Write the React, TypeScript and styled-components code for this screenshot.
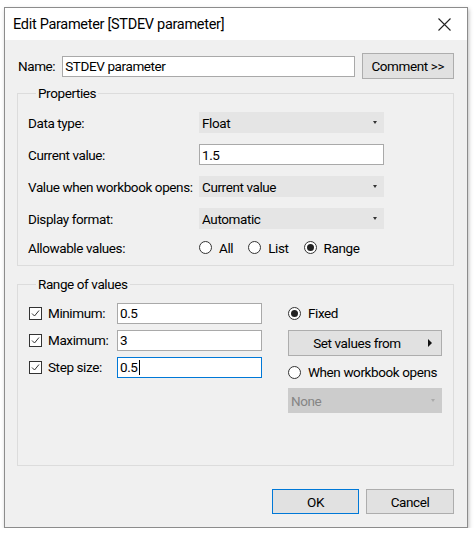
import React from "react";
import styled, { createGlobalStyle } from "styled-components";

const GlobalStyle = createGlobalStyle`
  html, body {
    margin: 0;
    padding: 0;
    background: #ffffff;
  }
  body {
    font-family: Roboto, "Noto Sans", "Liberation Sans", sans-serif;
    font-size: 13.5px;
    letter-spacing: -0.4px;
    color: #000;
  }
`;

const Window = styled.div`
  margin: 7px 0 0 4px;
  width: 464px;
  height: 521px;
  box-sizing: border-box;
  border: 1px solid #8c8c8c;
  background: #f0f0f0;
  box-shadow: 1px 2px 4px rgba(0, 0, 0, 0.25);
  display: flex;
  flex-direction: column;
`;

const TitleBar = styled.div`
  height: 32px;
  background: #ffffff;
  display: flex;
  align-items: center;
  justify-content: space-between;
  padding: 0 16px 0 8px;
  font-size: 14.5px;
  letter-spacing: -0.3px;
`;

const Body = styled.div`
  flex: 1;
  display: flex;
  flex-direction: column;
  padding: 13px 13px 13px 12px;
`;

const NameRow = styled.div`
  display: flex;
  align-items: center;
  gap: 7px;
  padding-left: 1px;
`;

const Label = styled.span`
  white-space: nowrap;
`;

const TextBox = styled.div<{ $width: number; $focused?: boolean }>`
  width: ${(p) => p.$width}px;
  height: 21px;
  box-sizing: border-box;
  background: #fff;
  border: 1px solid ${(p) => (p.$focused ? "#0078d7" : "#a9a9a9")};
  display: flex;
  align-items: center;
  padding-left: 2px;
  white-space: nowrap;
`;

const Caret = styled.span`
  display: inline-block;
  width: 1px;
  height: 15px;
  margin-left: 1px;
  background: #000;
`;

const Button = styled.div<{ $width: number; $height?: number; $default?: boolean; $padRight?: number }>`
  width: ${(p) => p.$width}px;
  height: ${(p) => p.$height ?? 25}px;
  box-sizing: border-box;
  background: #e1e1e1;
  border: 1px solid ${(p) => (p.$default ? "#0078d7" : "#adadad")};
  display: flex;
  align-items: center;
  justify-content: center;
  padding-right: ${(p) => p.$padRight ?? 0}px;
  position: relative;
  white-space: nowrap;
`;

const Group = styled.fieldset<{ $height: number; $top: number }>`
  margin: ${(p) => p.$top}px 0 0 0;
  height: ${(p) => p.$height}px;
  box-sizing: border-box;
  border: 1px solid #dcdcdc;
  padding: 0 10px 0 10px;
  min-width: 0;
`;

const Legend = styled.legend`
  padding: 0 2px;
  margin-left: 8px;
  line-height: 18px;
`;

const PropGrid = styled.div`
  display: grid;
  grid-template-columns: 171px 185px;
  grid-template-rows: 21px 21px 21px 21px 15px;
  row-gap: 11px;
  align-items: center;
  margin-top: 10px;
`;

const Combo = styled.div<{ $disabled?: boolean; $height?: number }>`
  height: ${(p) => p.$height ?? 21}px;
  box-sizing: border-box;
  background: ${(p) => (p.$disabled ? "#cccccc" : "#e5e5e5")};
  color: ${(p) => (p.$disabled ? "#858585" : "#000")};
  display: flex;
  align-items: center;
  justify-content: space-between;
  padding: 0 7px 0 3px;
`;

const RadioGroup = styled.div`
  display: flex;
  align-items: center;
  gap: 15px;
`;

const Option = styled.label<{ $height?: number }>`
  display: flex;
  align-items: center;
  gap: 7px;
  white-space: nowrap;
  ${(p) => (p.$height ? `height: ${p.$height}px;` : "")}
`;

const RadioCircle = styled.span<{ $checked?: boolean }>`
  width: 13px;
  height: 13px;
  box-sizing: border-box;
  border: 1px solid #333;
  border-radius: 50%;
  background: #fff;
  display: flex;
  align-items: center;
  justify-content: center;
  &::after {
    content: "";
    display: ${(p) => (p.$checked ? "block" : "none")};
    width: 7px;
    height: 7px;
    border-radius: 50%;
    background: #222;
  }
`;

const CheckBox = styled.span`
  width: 13px;
  height: 13px;
  box-sizing: border-box;
  border: 1px solid #333;
  background: #fff;
  display: flex;
  align-items: center;
  justify-content: center;
`;

const RangeBody = styled.div`
  display: flex;
  margin-top: 10px;
`;

const RangeLeft = styled.div`
  display: grid;
  grid-template-columns: 88px 145px;
  grid-auto-rows: 20px;
  row-gap: 7px;
  align-items: center;
  padding-left: 1px;
`;

const CheckLabel = styled.label`
  display: flex;
  align-items: center;
  gap: 6px;
  white-space: nowrap;
`;

const RangeRight = styled.div`
  margin-left: 26px;
  width: 154px;
  display: flex;
  flex-direction: column;
  gap: 6px;
`;

const Footer = styled.div`
  margin-top: auto;
  display: flex;
  justify-content: flex-end;
  gap: 7px;
`;

const ArrowSpot = styled.span`
  position: absolute;
  right: 9px;
  top: 50%;
  margin-top: -4px;
  display: flex;
`;

const DropArrow = ({ color = "#333" }: { color?: string }) => (
  <svg width="4" height="3" viewBox="0 0 4 3">
    <path d="M0 0 L4 0 L2 3 Z" fill={color} />
  </svg>
);

const CheckMark = () => (
  <svg width="11" height="11" viewBox="0 0 11 11">
    <path d="M2 5.5 L4.5 8 L9 2.5" fill="none" stroke="#333" strokeWidth="1" />
  </svg>
);

function ArrowRight() {
  return (
    <ArrowSpot>
      <svg width="4" height="8" viewBox="0 0 4 8">
        <path d="M0 0 L4 4 L0 8 Z" fill="#111" />
      </svg>
    </ArrowSpot>
  );
}

export default function App() {
  return (
    <>
      <GlobalStyle />
      <Window>
        <TitleBar>
          <span>Edit Parameter [STDEV parameter]</span>
          <svg width="13" height="13" viewBox="0 0 13 13">
            <path d="M0.5 0.5 L12.5 12.5 M12.5 0.5 L0.5 12.5" stroke="#222" strokeWidth="1.1" />
          </svg>
        </TitleBar>
        <Body>
          <NameRow>
            <Label>Name:</Label>
            <TextBox $width={294}>STDEV parameter</TextBox>
            <Button $width={93} $height={26}>
              Comment &gt;&gt;
            </Button>
          </NameRow>

          <Group $top={5} $height={182}>
            <Legend>Properties</Legend>
            <PropGrid>
              <Label>Data type:</Label>
              <Combo>
                <span>Float</span>
                <DropArrow />
              </Combo>
              <Label>Current value:</Label>
              <TextBox $width={185}>1.5</TextBox>
              <Label>Value when workbook opens:</Label>
              <Combo>
                <span>Current value</span>
                <DropArrow />
              </Combo>
              <Label>Display format:</Label>
              <Combo>
                <span>Automatic</span>
                <DropArrow />
              </Combo>
              <Label>Allowable values:</Label>
              <RadioGroup>
                <Option>
                  <RadioCircle />
                  All
                </Option>
                <Option>
                  <RadioCircle />
                  List
                </Option>
                <Option>
                  <RadioCircle $checked />
                  Range
                </Option>
              </RadioGroup>
            </PropGrid>
          </Group>

          <Group $top={9} $height={191}>
            <Legend>Range of values</Legend>
            <RangeBody>
              <RangeLeft>
                <CheckLabel>
                  <CheckBox>
                    <CheckMark />
                  </CheckBox>
                  Minimum:
                </CheckLabel>
                <TextBox $width={145}>0.5</TextBox>
                <CheckLabel>
                  <CheckBox>
                    <CheckMark />
                  </CheckBox>
                  Maximum:
                </CheckLabel>
                <TextBox $width={145}>3</TextBox>
                <CheckLabel>
                  <CheckBox>
                    <CheckMark />
                  </CheckBox>
                  Step size:
                </CheckLabel>
                <TextBox $width={145} $focused>
                  0.5
                  <Caret />
                </TextBox>
              </RangeLeft>
              <RangeRight>
                <Option $height={20}>
                  <RadioCircle $checked />
                  Fixed
                </Option>
                <Button $width={154} $height={26} $padRight={16} style={{ marginTop: 1 }}>
                  Set values from
                  <ArrowRight />
                </Button>
                <Option $height={20}>
                  <RadioCircle />
                  When workbook opens
                </Option>
                <Combo $disabled $height={25}>
                  <span>None</span>
                  <DropArrow color="#aaa" />
                </Combo>
              </RangeRight>
            </RangeBody>
          </Group>

          <Footer>
            <Button $width={87} $default>
              OK
            </Button>
            <Button $width={88}>Cancel</Button>
          </Footer>
        </Body>
      </Window>
    </>
  );
}
